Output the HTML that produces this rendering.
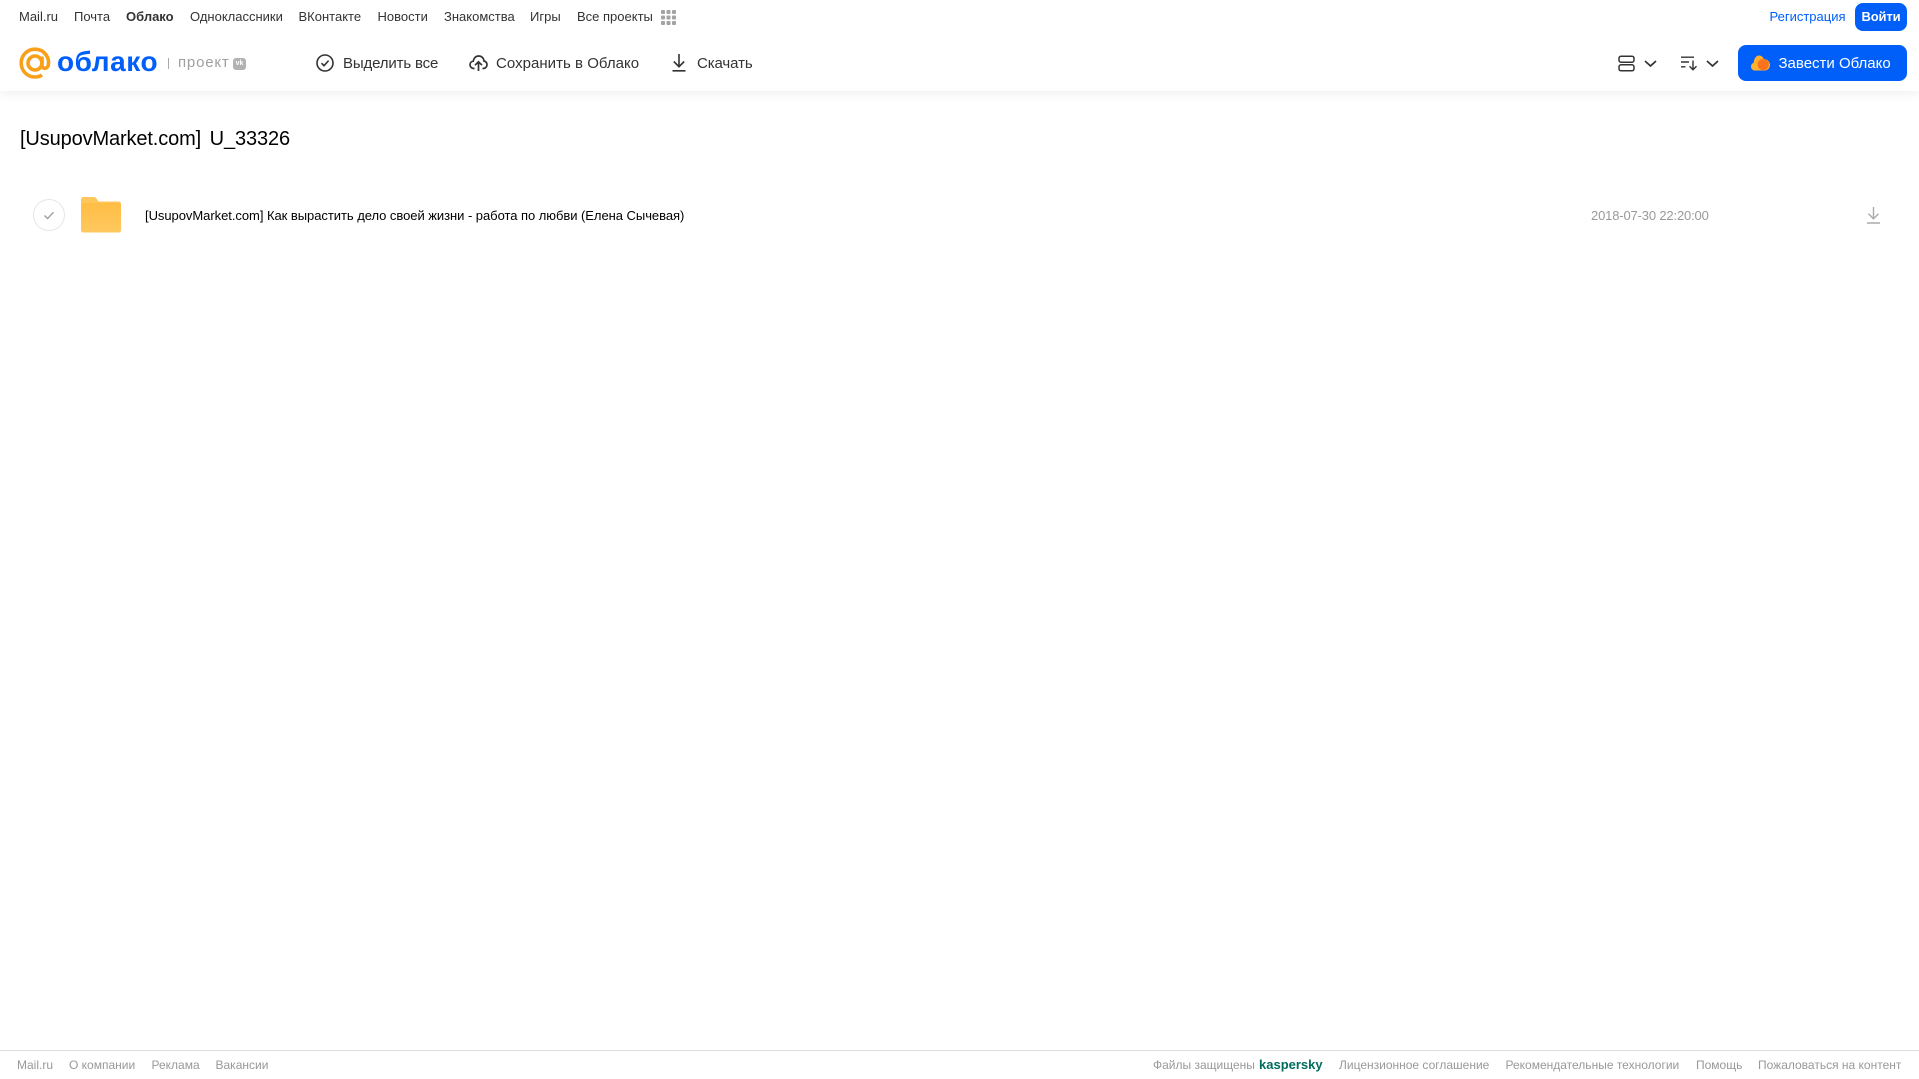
<!DOCTYPE html>
<html lang="ru">
<head>
<meta charset="utf-8">
<title>Облако</title>
<style>
html,body{margin:0;padding:0;background:#fff}
body{width:1919px;height:1079px;position:relative;overflow:hidden;font-family:"Liberation Sans",Arial,sans-serif}
.t{position:absolute;white-space:nowrap;line-height:20px;height:20px}
.n{top:7px;font-size:13px;color:#333}
.a{top:54px;font-size:15px;color:#333;letter-spacing:-.05px}
.f{top:1055px;font-size:12px;color:#999}
svg{position:absolute;display:block}
#hd{position:absolute;left:0;top:0;width:1919px;height:91px;background:#fff;box-shadow:0 2px 10px rgba(0,0,0,.07)}
.btn{position:absolute;background:#005ff9;border-radius:8px}
</style>
</head>
<body>
<div id="hd"></div>

<span class="t n" style="left:19px">Mail.ru</span>
<span class="t n" style="left:74px">Почта</span>
<span class="t n" style="left:126px;font-weight:700">Облако</span>
<span class="t n" style="left:190px">Одноклассники</span>
<span class="t n" style="left:298.5px">ВКонтакте</span>
<span class="t n" style="left:377.5px">Новости</span>
<span class="t n" style="left:444px">Знакомства</span>
<span class="t n" style="left:530px">Игры</span>
<span class="t n" style="left:577px">Все проекты</span>
<svg style="left:661px;top:10px" width="15" height="15" viewBox="0 0 15 15" fill="#a3a3a3">
<rect x="0" y="0" width="4" height="4" rx="1"/><rect x="5.5" y="0" width="4" height="4" rx="1"/><rect x="11" y="0" width="4" height="4" rx="1"/>
<rect x="0" y="5.5" width="4" height="4" rx="1"/><rect x="5.5" y="5.5" width="4" height="4" rx="1"/><rect x="11" y="5.5" width="4" height="4" rx="1"/>
<rect x="0" y="11" width="4" height="4" rx="1"/><rect x="5.5" y="11" width="4" height="4" rx="1"/><rect x="11" y="11" width="4" height="4" rx="1"/>
</svg>

<span class="t" style="left:1769.5px;top:7px;font-size:13px;color:#005ff9">Регистрация</span>
<div class="btn" style="left:1855px;top:3px;width:52px;height:28px"></div>
<span class="t" style="left:1855px;top:7px;width:52px;text-align:center;font-size:13px;font-weight:700;color:#fff;letter-spacing:-.15px">Войти</span>

<svg style="left:19px;top:47px" width="32" height="33" viewBox="0 0 32 33" fill="none" stroke="#f9a01b" stroke-width="3.6">
<circle cx="16" cy="16" r="7"/>
<path d="M23 9.5V18.5C23 22 28 22.5 29.2 18.5C31 11 25.5 2.2 16 2.2C8.2 2.2 2.2 8.5 2.2 16C2.2 24 8.4 30 16 30C19 30 21.2 29.2 23 28"/>
</svg>
<span class="t" style="left:57px;top:41.5px;height:40px;line-height:40px;font-size:28px;font-weight:700;color:#005ff9;letter-spacing:.55px">облако</span>
<div style="position:absolute;left:168px;top:58px;width:1px;height:11px;background:#aaa"></div>
<span class="t" style="left:178px;top:53px;font-size:15px;color:#a0a0a0;letter-spacing:.8px">проект</span>
<div style="position:absolute;left:233px;top:58px;width:13px;height:12px;background:#b2b2b2;border-radius:3px"></div>
<span class="t" style="left:233px;top:58px;width:13px;height:12px;line-height:12px;text-align:center;font-size:7px;font-weight:700;color:#fff">vk</span>

<svg style="left:316px;top:54px" width="18" height="18" viewBox="0 0 18 18" fill="none" stroke="#333" stroke-width="1.6">
<circle cx="9" cy="9" r="8"/><path d="M5.5 9.2L8 11.7L12.6 6.6"/>
</svg>
<span class="t a" style="left:343px;letter-spacing:-.15px">Выделить все</span>

<svg style="left:469px;top:54px" width="19" height="18" viewBox="0 0 19 18" fill="none" stroke="#333" stroke-width="1.7">
<path d="M5.5 14.5H4.8C2.6 14.5 1 12.8 1 10.8C1 8.9 2.4 7.4 4.2 7.2C4.7 4 7 2 9.7 2C12.5 2 14.7 4.1 15 7C16.8 7.4 18 8.9 18 10.8C18 12.8 16.4 14.5 14.3 14.5H13.5"/>
<path d="M9.5 17V8.2M6 11.2L9.5 7.8L13 11.2"/>
</svg>
<span class="t a" style="left:496px;letter-spacing:.03px">Сохранить в Облако</span>

<svg style="left:672px;top:54px" width="14" height="18" viewBox="0 0 14 18" fill="none" stroke="#333" stroke-width="1.6">
<path d="M7 0V12.5M1.8 7.5L7 12.7L12.2 7.5M0.5 16.8H13.5"/>
</svg>
<span class="t a" style="left:697px;letter-spacing:-.1px">Скачать</span>

<svg style="left:1618px;top:55px" width="17" height="17" viewBox="0 0 17 17" fill="none" stroke="#333" stroke-width="1.5">
<rect x="1" y="1.2" width="15" height="6" rx="2"/><rect x="1" y="9.8" width="15" height="6" rx="2"/>
</svg>
<svg style="left:1643.5px;top:60px" width="13" height="7" viewBox="0 0 13 7" fill="none" stroke="#333" stroke-width="1.7">
<path d="M1 1L6.5 6L12 1"/>
</svg>
<svg style="left:1681px;top:56px" width="17" height="15" viewBox="0 0 17 15" fill="none" stroke="#333" stroke-width="1.4">
<path d="M0 1.2H13M0 6H8M0 10.8H4.5M12 4.5V13.5M8.5 10.2L12 13.7L15.5 10.2"/>
</svg>
<svg style="left:1705.5px;top:60px" width="13" height="7" viewBox="0 0 13 7" fill="none" stroke="#333" stroke-width="1.7">
<path d="M1 1L6.5 6L12 1"/>
</svg>

<div class="btn" style="left:1738px;top:45px;width:169px;height:36px"></div>
<svg style="left:1751px;top:55px" width="19" height="16" viewBox="0 0 19 16">
<path d="M4 15.5C1.8 15.5 0 13.8 0 11.6C0 9.8 1.1 8.4 2.6 7.9C3 3.6 5 0.5 8 0.5C10.3 0.5 12 2 12.8 4C16 4 19 6.5 19 10C19 13.2 16.5 15.5 13.5 15.5Z" fill="#ffb02e"/>
<circle cx="12.2" cy="9.6" r="5.6" fill="#f8731c"/>
</svg>
<span class="t" style="left:1778.5px;top:54px;font-size:15px;color:#fff;letter-spacing:0">Завести Облако</span>

<span class="t" style="left:20px;top:126px;height:26px;line-height:26px;font-size:20px;color:#000;letter-spacing:-.13px;word-spacing:3.2px">[UsupovMarket.com] U_33326</span>

<svg style="left:33px;top:199px" width="32" height="32" viewBox="0 0 32 32" fill="none">
<circle cx="16" cy="16" r="15.5" stroke="#e6e6e6"/>
<path d="M11.5 16.5L14.6 19.6L20.5 13.2" stroke="#999" stroke-width="1.3"/>
</svg>
<svg style="left:81px;top:197px" width="40" height="36" viewBox="0 0 40 36">
<defs><linearGradient id="g" x1="0" y1="0" x2="0" y2="1"><stop offset="0" stop-color="#ffbd45"/><stop offset="1" stop-color="#ffc95f"/></linearGradient></defs>
<path d="M0 2.5C0 1.1 1.1 0 2.5 0H12.5C14 0 14.8.6 15.6 1.7L17.5 4.5H37.5C38.9 4.5 40 5.6 40 7V33C40 34.7 38.7 35.5 37.5 35.5H2.5C1.1 35.5 0 34.4 0 33Z" fill="#ffc65c"/>
<path d="M0 8C0 7 .8 6 2 6H38C39.2 6 40 7 40 8V33C40 34.7 38.7 35.5 37.5 35.5H2.5C1.1 35.5 0 34.4 0 33Z" fill="url(#g)"/>
</svg>
<span class="t" style="left:145px;top:206px;font-size:13px;color:#000;letter-spacing:-.045px">[UsupovMarket.com] Как вырастить дело своей жизни - работа по любви (Елена Сычевая)</span>
<span class="t" style="left:1591px;top:206px;font-size:13px;color:#999;letter-spacing:-.16px">2018-07-30 22:20:00</span>
<svg style="left:1867px;top:207px" width="13" height="17" viewBox="0 0 13 17" fill="none" stroke="#aaa" stroke-width="1.4">
<path d="M6.5 0V11.5M1.5 6.7L6.5 11.7L11.5 6.7M0 16H13"/>
</svg>

<div style="position:absolute;left:0;top:1050px;width:1919px;height:1px;background:#ddd"></div>
<span class="t f" style="left:17px">Mail.ru</span>
<span class="t f" style="left:69px">О компании</span>
<span class="t f" style="left:151.5px">Реклама</span>
<span class="t f" style="left:215.5px">Вакансии</span>
<span class="t f" style="left:1153px">Файлы защищены</span>
<span class="t f" style="left:1259px;font-size:13px;font-weight:700;color:#006d5c">kaspersky</span>
<span class="t f" style="left:1339px">Лицензионное соглашение</span>
<span class="t f" style="left:1505.5px">Рекомендательные технологии</span>
<span class="t f" style="left:1696px">Помощь</span>
<span class="t f" style="left:1758px">Пожаловаться на контент</span>
</body>
</html>
